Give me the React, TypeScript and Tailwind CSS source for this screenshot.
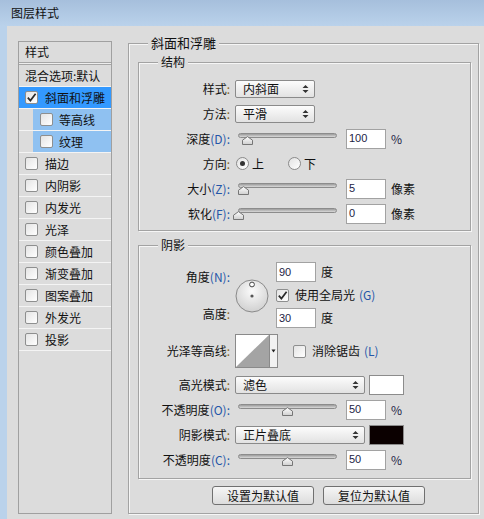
import React from "react";

function Check() {
  return (
    <svg width="11" height="11" viewBox="0 0 11 11">
      <path d="M1.8 5.6 L4.4 8.6 L9.6 1.8" fill="none" stroke="#2a2a2a" strokeWidth="1.7" />
    </svg>
  );
}

function Checkbox({ checked = false }: { checked?: boolean }) {
  return (
    <span className="flex h-[13px] w-[13px] shrink-0 items-center justify-center rounded-[2px] border border-[#8e8f8f] bg-gradient-to-br from-[#e4e4e4] to-[#ffffff]">
      {checked && <Check />}
    </span>
  );
}

function Radio({ checked = false }: { checked?: boolean }) {
  return (
    <span className="flex h-[13px] w-[13px] shrink-0 items-center justify-center rounded-full border border-[#8a8a8a] bg-gradient-to-br from-[#e2e2e2] to-[#ffffff]">
      {checked && <span className="h-[5px] w-[5px] rounded-full bg-[#333333]" />}
    </span>
  );
}

function UpDown() {
  return (
    <svg width="7" height="10" viewBox="0 0 7 10">
      <path d="M0.5 4 L3.5 1 L6.5 4 Z M0.5 6 L3.5 9 L6.5 6 Z" fill="#333333" />
    </svg>
  );
}

function Select({ text, wide = false }: { text: string; wide?: boolean }) {
  return (
    <div
      className={
        "flex h-[18px] items-center justify-between rounded-[2px] border border-[#8a8a8a] bg-gradient-to-b from-[#fcfcfc] to-[#e2e2e2] pl-[7px] pr-[5px] leading-none " +
        (wide ? "w-[130px]" : "w-[80px]")
      }
    >
      <span>{text}</span>
      <UpDown />
    </div>
  );
}

function Slider({ pct }: { pct: number }) {
  const left = 3 + pct * 99 - 5.5;
  return (
    <div className="relative h-[25px] w-[105px] shrink-0">
      <div className="absolute left-[3px] right-[3px] top-[7px] h-[5px] rounded-full border border-[#8c8c8c] bg-gradient-to-b from-[#9c9c9c] to-[#dadada]" />
      <svg className="absolute top-[10px]" style={{ left }} width="11" height="9" viewBox="0 0 11 9">
        <defs>
          <linearGradient id="thumbg" x1="0" y1="0" x2="0" y2="1">
            <stop offset="0" stopColor="#ffffff" />
            <stop offset="1" stopColor="#cfcfcf" />
          </linearGradient>
        </defs>
        <path d="M0.5 8.5 L0.5 4.2 L5.5 0.6 L10.5 4.2 L10.5 8.5 Z" fill="url(#thumbg)" stroke="#767676" strokeWidth="1" />
      </svg>
    </div>
  );
}

function NumBox({ v }: { v: string }) {
  return (
    <div className="flex h-[20px] w-[40px] shrink-0 items-center border border-[#a2a2a2] bg-white pl-[2px] font-['Liberation_Sans',sans-serif] text-[11px] text-[#1d1d45]">
      {v}
    </div>
  );
}

function Label({ t, k }: { t: string; k?: string }) {
  return (
    <div className="w-[91px] shrink-0 text-right leading-[16px]">
      {t}
      {k ? (
        <span className="text-[#2456a8]">({k}):</span>
      ) : (
        <span className="text-[#8a6420]">:</span>
      )}
    </div>
  );
}

function Row({ t, k, children }: { t: string; k?: string; children: React.ReactNode }) {
  return (
    <div className="flex h-[25px] items-center">
      <Label t={t} k={k} />
      <div className="ml-[5px] flex items-center">{children}</div>
    </div>
  );
}

function Group({
  title,
  big = false,
  className,
  children,
}: {
  title: string;
  big?: boolean;
  className: string;
  children: React.ReactNode;
}) {
  return (
    <div
      className={
        "relative shrink-0 border border-[#a3a3a3] shadow-[inset_1px_1px_0_#f6f6f6,1px_1px_0_#f6f6f6] " + className
      }
    >
      <span
        className={
          "absolute left-[19px] bg-[#dcdcdc] px-[3px] " +
          (big ? "top-[-10px] text-[13px] leading-[18px]" : "top-[-9px] leading-[16px]")
        }
      >
        {title}
      </span>
      {children}
    </div>
  );
}

function Dial() {
  return (
    <svg width="34" height="34" viewBox="0 0 34 34">
      <defs>
        <radialGradient id="dialg" cx="0.5" cy="0.35" r="0.7">
          <stop offset="0" stopColor="#fbfbfb" />
          <stop offset="1" stopColor="#cdcdcd" />
        </radialGradient>
      </defs>
      <circle cx="17" cy="17" r="16" fill="url(#dialg)" stroke="#8a8a8a" strokeWidth="1" />
      <circle cx="17" cy="5.5" r="2.4" fill="#ffffff" stroke="#444444" strokeWidth="1" />
      <circle cx="17" cy="17" r="1.6" fill="#555555" />
    </svg>
  );
}

function Contour() {
  return (
    <svg width="43" height="34" viewBox="0 0 43 34" className="shrink-0">
      <rect x="0.5" y="0.5" width="42" height="33" fill="#f2f2f2" stroke="#8a8a8a" />
      <polygon points="1,1 34,1 1,33" fill="#ffffff" />
      <polygon points="1,33 34,1 34,33" fill="#a4a4a4" />
      <line x1="34.5" y1="1" x2="34.5" y2="33" stroke="#8a8a8a" />
      <polygon points="36.5,15.5 40.5,15.5 38.5,18.5" fill="#222222" />
    </svg>
  );
}

function Swatch({ dark = false }: { dark?: boolean }) {
  return (
    <div
      className={
        "ml-[4px] h-[20px] w-[35px] shrink-0 border border-[#8c8c8c] " + (dark ? "bg-[#0b0000]" : "bg-white")
      }
    />
  );
}

function Btn({ t }: { t: string }) {
  return (
    <div className="flex h-[19px] w-[102px] items-center justify-center rounded-[3px] border border-[#707070] bg-gradient-to-b from-[#f6f6f6] to-[#dcdcdc] leading-none">
      {t}
    </div>
  );
}

const mainItems = ["描边", "内阴影", "内发光", "光泽", "颜色叠加", "渐变叠加", "图案叠加", "外发光", "投影"];

export default function App() {
  return (
    <div className="flex h-[519px] w-[484px] flex-col overflow-hidden bg-[#dcdcdc] font-['Noto_Sans_CJK_SC','Liberation_Sans',sans-serif] text-[12px] text-[#111111]">
      <div className="flex h-[26px] shrink-0 items-center bg-gradient-to-b from-[#a6bfdc] to-[#bad2eb] pl-[11px]">
        图层样式
      </div>
      <div className="flex flex-1">
        <div className="w-[7px] shrink-0 bg-[#bad2eb]" />
        <div className="flex flex-1 items-start pl-[11px]">
          {/* left list */}
          <div className="mt-[15px] flex h-[473px] w-[94px] shrink-0 flex-col border border-[#a0a0a0]">
            <div className="h-[20px] pl-[6px] leading-[20px]">样式</div>
            <div className="h-[3px] border-y border-[#a6a6a6] bg-[#eeeeee]" />
            <div className="h-[22px] border-b border-[#f4f4f4] pl-[6px] leading-[21px]">混合选项:默认</div>
            <div className="flex h-[22px] items-center border-b border-[#f4f4f4] bg-[#3399ff] pl-[6px]">
              <Checkbox checked />
              <span className="ml-[7px]">斜面和浮雕</span>
            </div>
            {["等高线", "纹理"].map((t) => (
              <div key={t} className="flex h-[22px] border-b border-[#f4f4f4]">
                <div className="w-[14px] shrink-0" />
                <div className="flex flex-1 items-center bg-[#8fc1f1] pl-[7px]">
                  <Checkbox />
                  <span className="ml-[6px]">{t}</span>
                </div>
              </div>
            ))}
            {mainItems.map((t) => (
              <div key={t} className="flex h-[22px] items-center border-b border-[#f4f4f4] pl-[6px]">
                <Checkbox />
                <span className="ml-[7px]">{t}</span>
              </div>
            ))}
          </div>

          {/* right */}
          <Group title="斜面和浮雕" big className="ml-[16px] mt-[17px] flex h-[471px] w-[351px] flex-col">
            <Group title="结构" className="ml-[9px] mt-[18px] h-[169px] w-[333px] pt-[13px]">
              <Row t="样式">
                <Select text="内斜面" />
              </Row>
              <Row t="方法">
                <Select text="平滑" />
              </Row>
              <Row t="深度" k="D">
                <Slider pct={0.1} />
                <div className="ml-[6px]">
                  <NumBox v="100" />
                </div>
                <span className="ml-[5px] text-[#1d1d45]">%</span>
              </Row>
              <Row t="方向">
                <div className="ml-[1px] flex items-center">
                  <Radio checked />
                  <span className="ml-[3px]">上</span>
                  <div className="ml-[24px]">
                    <Radio />
                  </div>
                  <span className="ml-[3px]">下</span>
                </div>
              </Row>
              <Row t="大小" k="Z">
                <Slider pct={0.06} />
                <div className="ml-[6px]">
                  <NumBox v="5" />
                </div>
                <span className="ml-[5px]">像素</span>
              </Row>
              <Row t="软化" k="F">
                <Slider pct={0} />
                <div className="ml-[6px]">
                  <NumBox v="0" />
                </div>
                <span className="ml-[5px]">像素</span>
              </Row>
            </Group>

            <Group title="阴影" className="ml-[9px] mt-[14px] h-[234px] w-[333px]">
              <div className="flex h-[82px]">
                <div className="flex flex-col pt-[23px]">
                  <Label t="角度" k="N" />
                  <div className="mt-[21px]">
                    <Label t="高度" />
                  </div>
                </div>
                <div className="ml-[5px] mt-[33px]">
                  <Dial />
                </div>
                <div className="ml-[7px] flex flex-col pt-[16px]">
                  <div className="flex h-[20px] items-center">
                    <NumBox v="90" />
                    <span className="ml-[5px]">度</span>
                  </div>
                  <div className="flex h-[26px] items-center">
                    <Checkbox checked />
                    <span className="ml-[6px]">使用全局光</span>
                    <span className="ml-[4px] text-[#2456a8]">(G)</span>
                  </div>
                  <div className="flex h-[20px] items-center">
                    <NumBox v="30" />
                    <span className="ml-[5px]">度</span>
                  </div>
                </div>
              </div>
              <div className="mt-[6px] flex h-[34px] items-center">
                <Label t="光泽等高线" />
                <div className="ml-[5px]">
                  <Contour />
                </div>
                <div className="ml-[15px]">
                  <Checkbox />
                </div>
                <span className="ml-[6px]">消除锯齿</span>
                <span className="ml-[4px] text-[#2456a8]">(L)</span>
              </div>
              <div className="mt-[4px]">
                <Row t="高光模式">
                  <Select text="滤色" wide />
                  <Swatch />
                </Row>
                <Row t="不透明度" k="O">
                  <Slider pct={0.5} />
                  <div className="ml-[6px]">
                    <NumBox v="50" />
                  </div>
                  <span className="ml-[5px] text-[#1d1d45]">%</span>
                </Row>
                <Row t="阴影模式">
                  <Select text="正片叠底" wide />
                  <Swatch dark />
                </Row>
                <Row t="不透明度" k="C">
                  <Slider pct={0.5} />
                  <div className="ml-[6px]">
                    <NumBox v="50" />
                  </div>
                  <span className="ml-[5px] text-[#1d1d45]">%</span>
                </Row>
              </div>
            </Group>

            <div className="ml-[83px] mt-[7px] flex gap-[9px]">
              <Btn t="设置为默认值" />
              <Btn t="复位为默认值" />
            </div>
          </Group>
        </div>
      </div>
    </div>
  );
}
